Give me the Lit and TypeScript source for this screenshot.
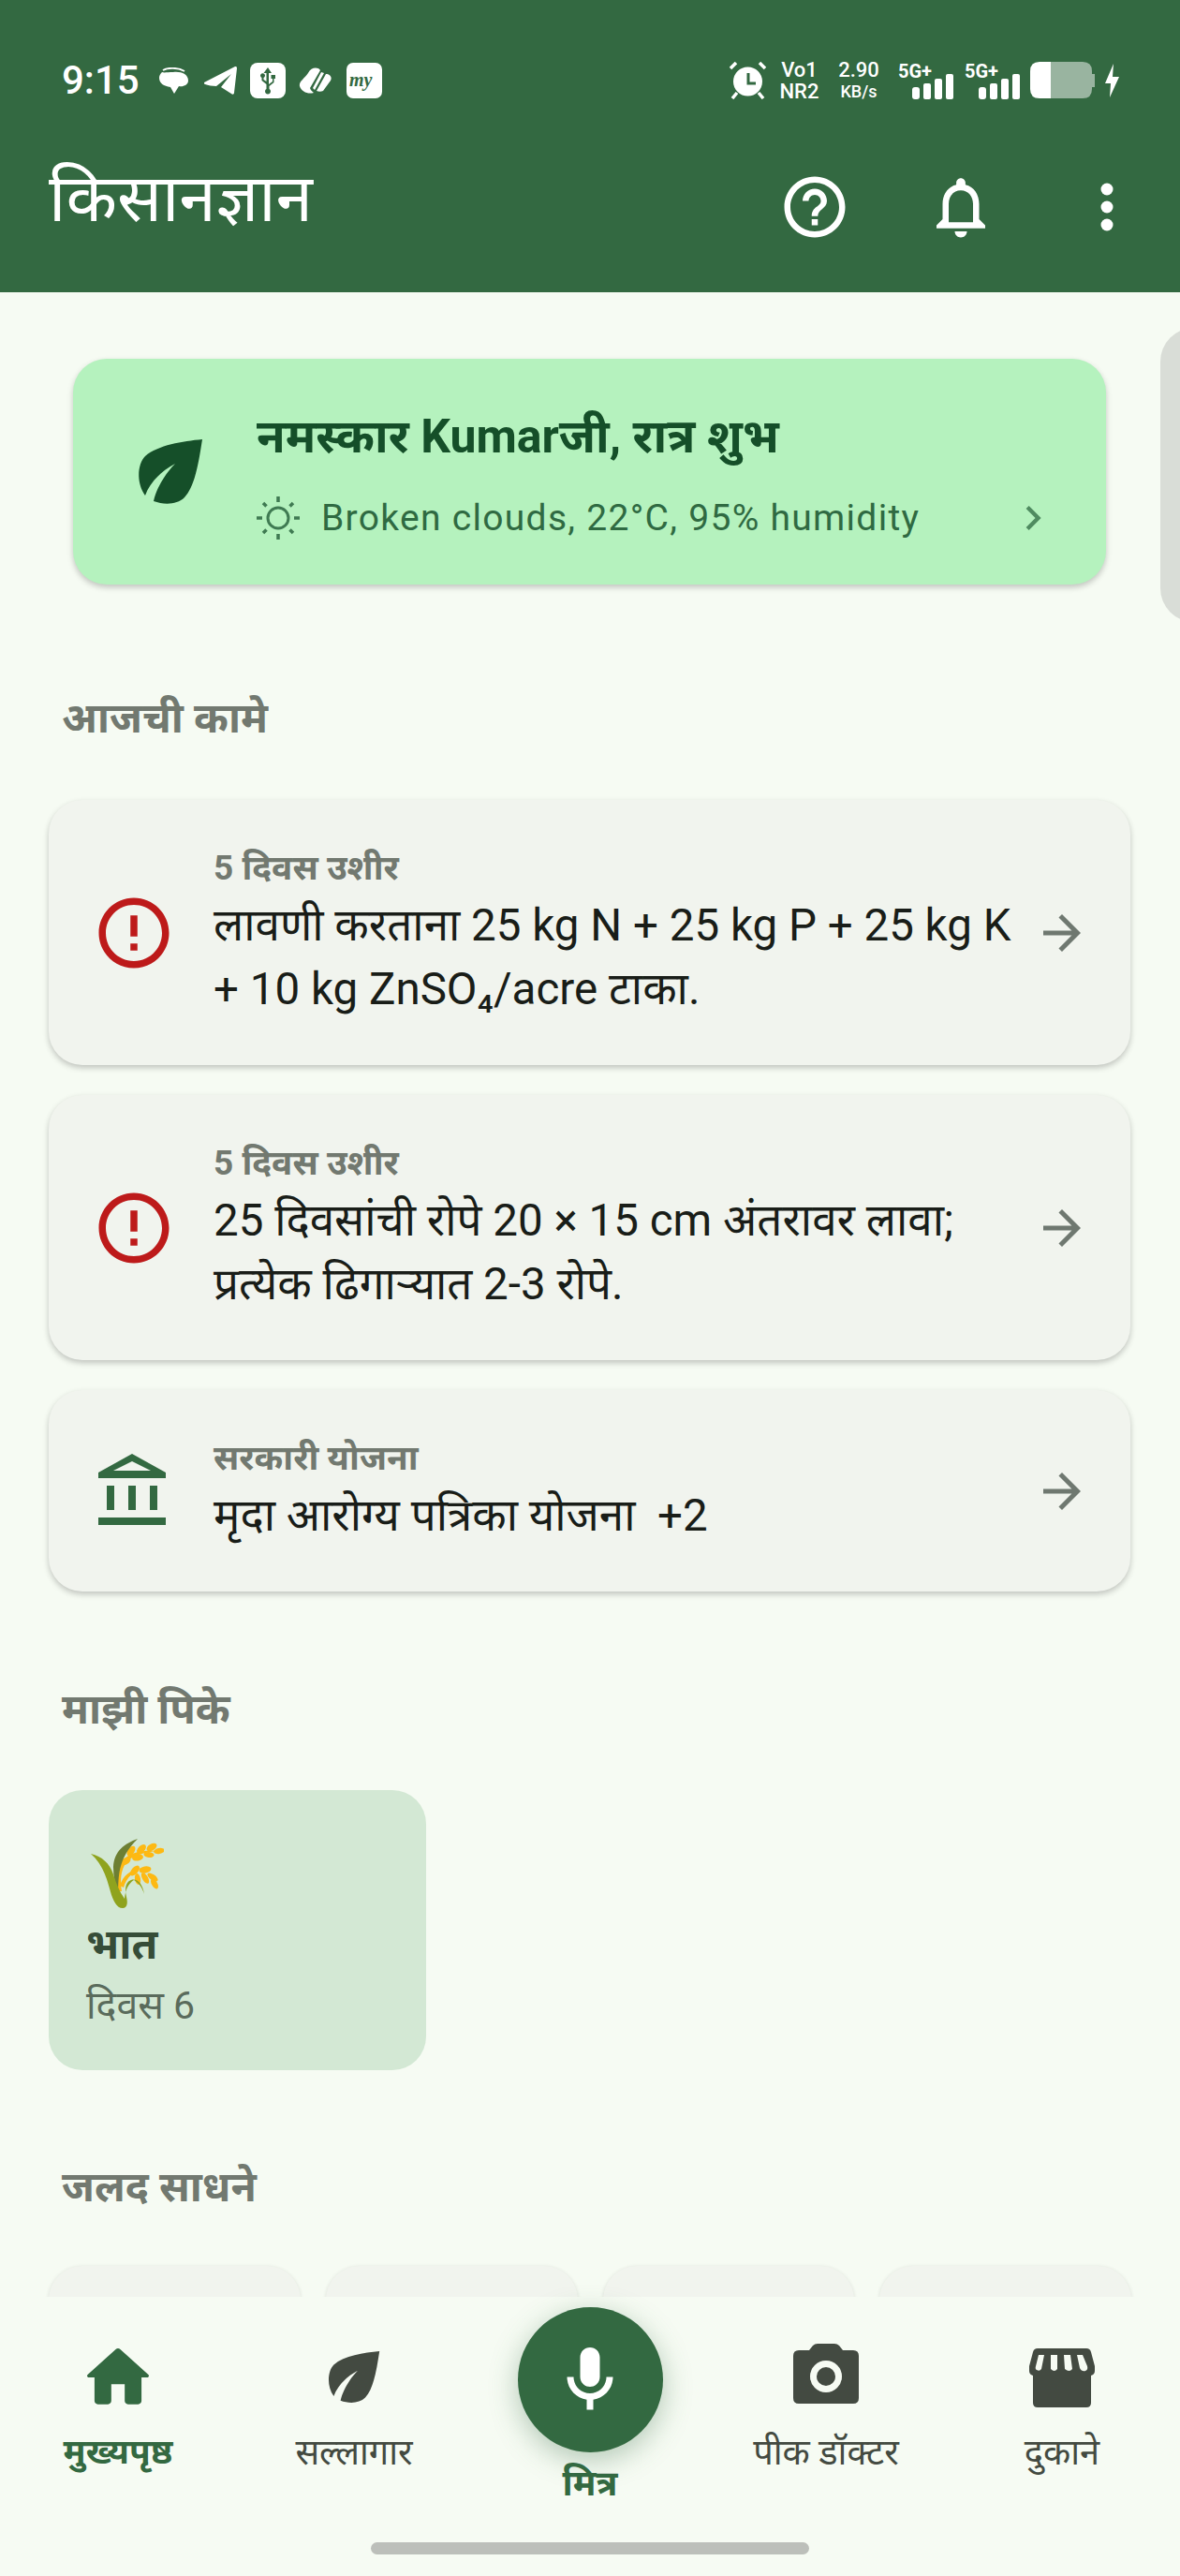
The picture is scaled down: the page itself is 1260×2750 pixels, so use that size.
import { LitElement, html, css } from 'lit';
import { customElement } from 'lit/decorators.js';

const LEAF = 'M69 0C48 2 22 6 8 18C0 26-2 46 8 60C13 46 25 34 40 26C30 36 20 52 17 66C28 70 42 70 50 62C61 50 65 26 69 0Z';

const leaf = (cls: string) => html`<svg class=${cls} viewBox="0 0 70 70"><path fill="currentColor" d=${LEAF}/></svg>`;

const arrow = html`<svg class="arrow" viewBox="0 0 24 24"><path fill="currentColor" d="M12 4l-1.41 1.41L16.17 11H4v2h12.17l-5.58 5.59L12 20l8-8z"/></svg>`;

const alertIcon = html`<svg class="task-icon" viewBox="0 0 24 24"><path fill="#bd1a1a" d="M11 15h2v2h-2zm0-8h2v6h-2zm.99-5C6.47 2 2 6.48 2 12s4.47 10 9.99 10C17.52 22 22 17.52 22 12S17.52 2 11.99 2zM12 20c-4.42 0-8-3.58-8-8s3.58-8 8-8 8 3.58 8 8-3.58 8-8 8z"/></svg>`;

const bankIcon = html`<svg class="bank" viewBox="0 0 72 76"><path fill="#336941" fill-rule="evenodd" d="M36 0L72 20V26H0V20ZM36 8L16 18H56ZM9 34H17V60H9ZM32 34H40V60H32ZM55 34H63V60H55ZM0 68H72V76H0Z"/></svg>`;

const signal = (arrows: boolean) => html`
  <div class="signal">
    <span class="signal__label">5G+</span>
    <svg class="signal__bars" viewBox="0 0 60 40">
      ${arrows ? html`<path fill="#fff" opacity=".25" d="M5 27l5-6 5 6zM5 31l5 7 5-7z"/>` : ''}
      <rect x="15" y="27" width="8" height="13" rx="3" fill="#fff"/>
      <rect x="27" y="23" width="8" height="17" rx="2" fill="#fff"/>
      <rect x="39" y="18" width="8" height="22" rx="2" fill="#fff"/>
      <rect x="51" y="13" width="8" height="27" rx="2" fill="#fff"/>
    </svg>
  </div>`;

type Task = { over: string; lines: unknown; icon: unknown };

const tasks: Task[] = [
  {
    over: '5 दिवस उशीर',
    icon: alertIcon,
    lines: html`लावणी करताना 25 kg N + 25 kg P + 25 kg K<br />+ 10 kg ZnSO₄/acre टाका.`,
  },
  {
    over: '5 दिवस उशीर',
    icon: alertIcon,
    lines: html`25 दिवसांची रोपे 20 × 15 cm अंतरावर लावा;<br />प्रत्येक ढिगाऱ्यात 2-3 रोपे.`,
  },
  {
    over: 'सरकारी योजना',
    icon: bankIcon,
    lines: html`मृदा आरोग्य पत्रिका योजना&nbsp; +2`,
  },
];

@customElement('app-root')
export default class AppRoot extends LitElement {
  static override styles = css`
    :host {
      display: block;
      width: 1260px;
      height: 2750px;
      overflow: hidden;
      background: #f6fbf3;
      font-family: Roboto, 'Noto Sans', sans-serif;
      color: #191d18;
    }
    .page {
      display: flex;
      flex-direction: column;
      height: 2750px;
    }
    svg {
      display: block;
      flex: none;
    }
    .top {
      flex: none;
      height: 312px;
      background: #336941;
      color: #fff;
    }
    .status {
      display: flex;
      align-items: center;
      justify-content: space-between;
      box-sizing: border-box;
      height: 150px;
      padding: 21px 65px 0 66px;
    }
    .status__side {
      display: flex;
      align-items: center;
    }
    .time {
      font-size: 42px;
      font-weight: 500;
      margin-right: 21px;
    }
    .tiny {
      display: flex;
      flex-direction: column;
      align-items: center;
      font-size: 22px;
      font-weight: 500;
      line-height: 23px;
    }
    .my {
      font: italic 700 20px 'Liberation Serif', serif;
      fill: #336941;
    }
    .signal {
      display: grid;
      width: 60px;
      height: 40px;
    }
    .signal__label,
    .signal__bars {
      grid-area: 1 / 1;
    }
    .signal__label {
      font-size: 20px;
      font-weight: 700;
      line-height: 20px;
    }
    .signal__bars {
      width: 60px;
      height: 40px;
    }
    .appbar {
      display: flex;
      align-items: center;
      height: 142px;
      padding-left: 52px;
    }
    .brand {
      flex: 1;
      font-size: 71px;
      line-height: 80px;
      margin-top: -18px;
    }
    .app-icon {
      width: 78px;
      height: 78px;
    }
    .content {
      flex: 1;
      min-height: 0;
      overflow: hidden;
    }
    .carousel {
      display: flex;
      align-items: flex-start;
      gap: 58px;
      height: 314px;
      margin-top: 38px;
      padding-left: 78px;
    }
    .hero {
      flex: none;
      display: flex;
      align-items: center;
      box-sizing: border-box;
      width: 1103px;
      height: 241px;
      margin-top: 33px;
      padding: 0 60px 0 69px;
      border-radius: 36px;
      background: #b5f2be;
      color: #154f29;
      box-shadow: 0 3px 6px rgba(0, 0, 0, 0.22);
    }
    .hero__leaf {
      width: 70px;
      height: 70px;
      margin-right: 57px;
    }
    .hero__body {
      flex: 1;
    }
    .hero__title {
      margin-top: 3px;
      font-size: 50px;
      font-weight: 700;
      line-height: 70px;
    }
    .hero__weather {
      display: flex;
      align-items: center;
      margin-top: 26px;
      color: #2f6a42;
      font-size: 39px;
      letter-spacing: 1.3px;
    }
    .sun {
      width: 46px;
      height: 46px;
      margin-right: 23px;
    }
    .chev {
      width: 52px;
      height: 52px;
      margin-left: auto;
      margin-right: -8px;
      color: #4f8b60;
    }
    .peek {
      flex: none;
      width: 1105px;
      height: 314px;
      border-radius: 36px;
      background: #d9ddd7;
    }
    .section {
      height: 60px;
      line-height: 60px;
      padding-left: 66px;
      color: #727970;
      font-size: 44.5px;
      font-weight: 700;
    }
    .section--tasks {
      margin: 73px 0 57px;
    }
    .section--crops {
      margin: 96px 0 56px;
    }
    .section--tools {
      margin: 95px 0 54px;
    }
    .tasks {
      display: flex;
      flex-direction: column;
      gap: 32px;
      margin: 0 53px 0 52px;
    }
    .task {
      display: flex;
      align-items: center;
      box-sizing: border-box;
      padding: 48px 43px 47px 46px;
      border-radius: 36px;
      background: #f1f4ee;
      box-shadow: 0 3px 6px rgba(0, 0, 0, 0.22);
    }
    .task-slot {
      flex: none;
      width: 130px;
    }
    .task-icon {
      width: 90px;
      height: 90px;
    }
    .bank {
      width: 72px;
      height: 76px;
      margin: 0 0 4px 7px;
    }
    .task__body {
      flex: 1;
      min-width: 0;
    }
    .task__over {
      color: #727970;
      font-size: 37px;
      font-weight: 700;
      line-height: 50px;
    }
    .task__text {
      margin-top: 2px;
      font-size: 47.5px;
      line-height: 68px;
      white-space: nowrap;
    }
    .arrow {
      width: 60px;
      height: 60px;
      color: #6f7870;
    }
    .crop {
      box-sizing: border-box;
      width: 403px;
      height: 299px;
      margin-left: 52px;
      padding: 52px 40px 0;
      border-radius: 36px;
      background: #d3e8d4;
    }
    .rice {
      width: 78px;
      height: 74px;
      margin-left: 5px;
    }
    .crop__name {
      margin-top: 9px;
      color: #364d38;
      font-size: 45px;
      font-weight: 700;
      line-height: 60px;
    }
    .crop__day {
      margin-top: 7px;
      color: #5a6b5c;
      font-size: 41px;
      line-height: 56px;
    }
    .tools {
      display: grid;
      grid-template-columns: repeat(4, 1fr);
      gap: 27px;
      width: 1156px;
      margin-left: 52px;
    }
    .tool {
      height: 300px;
      border-radius: 36px;
      background: #f1f4ee;
      box-shadow: 0 1px 4px rgba(0, 0, 0, 0.12);
    }
    .nav {
      flex: none;
      display: flex;
      flex-direction: column;
      align-items: center;
      height: 298px;
      background: #f6fbf3;
    }
    .tabs {
      display: grid;
      grid-template-columns: repeat(5, 252px);
      height: 262px;
    }
    .tab {
      display: flex;
      flex-direction: column;
      align-items: center;
      padding-top: 44px;
      color: #434a41;
      font-size: 38px;
      line-height: 44px;
    }
    .tab--on {
      color: #336941;
      font-size: 37px;
      font-weight: 700;
    }
    .tab__icon {
      display: flex;
      align-items: center;
      justify-content: center;
      width: 86px;
      height: 84px;
      margin-bottom: 16px;
    }
    .home {
      width: 86px;
      height: 86px;
    }
    .nav-leaf {
      width: 56px;
      height: 56px;
    }
    .camera {
      width: 70px;
      height: 64px;
      margin-top: -8px;
    }
    .store {
      width: 70px;
      height: 63px;
    }
    .tab--mic {
      padding-top: 11px;
      color: #336941;
      font-weight: 700;
    }
    .fab {
      display: flex;
      align-items: center;
      justify-content: center;
      width: 155px;
      height: 155px;
      margin-bottom: 11px;
      border-radius: 50%;
      background: #336941;
      box-shadow: 0 8px 30px rgba(51, 105, 65, 0.35);
    }
    .mic {
      width: 84px;
      height: 84px;
    }
    .pill {
      width: 468px;
      height: 13px;
      border-radius: 7px;
      background: #bcbfba;
    }
  `;

  private renderStatus() {
    return html`
      <div class="status">
        <div class="status__side">
          <span class="time">9:15</span>
          <svg width="31" height="28" viewBox="0 0 31 28" style="margin-right:17px">
            <path fill="#fff" d="M15 5C23 4 31 7 31 14C31 19 25 21 21 20L16 28L12 21C5 20 0 17 0 11C0 9 1 7 3 5C5 6 9 5 15 5Z"/>
            <path fill="none" stroke="#fff" stroke-width="2" d="M4 3C9 0 20 0 27 4"/>
          </svg>
          <svg width="35" height="30" viewBox="0 0 35 30" style="margin-right:14px">
            <path fill="#fff" d="M0 17L33 0C34 0 35 0 35 2L32 28C32 30 30 30 29 29L18 22L29 8L13 21C9 21 4 20 1 19C0 19 0 18 0 17Z"/>
          </svg>
          <svg width="38" height="38" viewBox="0 0 38 38" style="margin-right:14px">
            <rect width="38" height="38" rx="8" fill="#fff"/>
            <path fill="#336941" d="M19 5l4 6h-3v12l4-3v-3h-1.500v-4h4.500v4h-1.500v4l-5 4v3a3 3 0 1 1-3 0v-5l-5-4v-3a2.500 2.500 0 1 1 2 0v2l3 2V11h-3z"/>
          </svg>
          <svg width="35" height="28" viewBox="0 0 35 28" style="margin-right:16px">
            <path fill="#fff" d="M10 6C13 0 20-1 23 3L12 22C13 25 15 26 16 27C10 29 3 26 1 20C0 15 6 12 10 6ZM24 5L27 6L17 24L15 22ZM29 7C33 7 36 10 34 14L26 25C24 26 21 26 19 25Z"/>
          </svg>
          <svg width="38" height="38" viewBox="0 0 38 38">
            <rect width="38" height="38" rx="7" fill="#fff"/>
            <text x="3" y="25" class="my">my</text>
          </svg>
        </div>
        <div class="status__side">
          <svg width="39" height="40" viewBox="0 0 39 40">
            <circle cx="19.500" cy="21" r="15.500" fill="#fff"/>
            <path fill="none" stroke="#336941" stroke-width="3" d="M20 12V23H28"/>
            <path fill="none" stroke="#fff" stroke-width="3.500" d="M1 7L7 1M38 7L32 1M3 39L8 33M36 39L31 33"/>
          </svg>
          <div class="tiny" style="margin-left:13px;width:45px"><span>Vo1</span><span>NR2</span></div>
          <div class="tiny" style="margin-left:18px;width:46px"><span>2.90</span><span style="font-size:18px">KB/s</span></div>
          <span style="margin-left:19px">${signal(true)}</span>
          <span style="margin-left:11px">${signal(false)}</span>
          <svg width="69" height="39" viewBox="0 0 69 39" style="margin-left:10px">
            <path fill="#fff" d="M10 0H22V39H10Q0 39 0 29V10Q0 0 10 0Z"/>
            <path fill="#fff" opacity=".5" d="M22 0H56Q66 0 66 10V13H69V27H66V29Q66 39 56 39H22Z"/>
          </svg>
          <svg width="15" height="36" viewBox="0 0 15 36" style="margin-left:11px">
            <path fill="#fff" d="M9 0L0 21H6L5 36L15 14H8Z"/>
          </svg>
        </div>
      </div>`;
  }

  private renderAppBar() {
    return html`
      <div class="appbar">
        <div class="brand">किसानज्ञान</div>
        <svg class="app-icon" viewBox="0 0 24 24"><path fill="#fff" d="M11 18h2v-2h-2v2zm1-16C6.480 2 2 6.480 2 12s4.480 10 10 10 10-4.480 10-10S17.520 2 12 2zm0 18c-4.410 0-8-3.590-8-8s3.590-8 8-8 8 3.590 8 8-3.590 8-8 8zm0-14c-2.210 0-4 1.790-4 4h2c0-1.100.9-2 2-2s2 .9 2 2c0 2-3 1.750-3 5h2c0-2.250 3-2.500 3-5 0-2.210-1.790-4-4-4z"/></svg>
        <svg class="app-icon" style="margin-left:78px" viewBox="0 0 24 24"><path fill="#fff" d="M12 22c1.100 0 2-.9 2-2h-4c0 1.100.9 2 2 2zm6-6v-5c0-3.070-1.630-5.640-4.500-6.320V4c0-.83-.67-1.500-1.500-1.500s-1.500.67-1.500 1.500v.68C7.640 5.360 6 7.920 6 11v5l-2 2v1h16v-1l-2-2zm-2 1H8v-6c0-2.480 1.510-4.500 4-4.500s4 2.020 4 4.500v6z"/></svg>
        <svg class="app-icon" style="margin:0 39px 0 78px" viewBox="0 0 78 78">
          <circle cx="39" cy="20" r="6.500" fill="#fff"/>
          <circle cx="39" cy="39" r="6.500" fill="#fff"/>
          <circle cx="39" cy="58" r="6.500" fill="#fff"/>
        </svg>
      </div>`;
  }

  private renderHero() {
    return html`
      <div class="carousel">
        <div class="hero">
          ${leaf('hero__leaf')}
          <div class="hero__body">
            <div class="hero__title">नमस्कार Kumarजी, रात्र शुभ</div>
            <div class="hero__weather">
              <svg class="sun" viewBox="0 0 46 46">
                <circle cx="23" cy="23" r="11" fill="none" stroke="#3f7a52" stroke-width="3"/>
                <path fill="none" stroke="#3f7a52" stroke-width="3.500" d="M23 0V6M23 40V46M0 23H6M40 23H46M7 7L10.500 10.500M35.500 35.500L39 39M7 39L10.500 35.500M35.500 10.500L39 7"/>
              </svg>
              <span>Broken clouds, 22°C, 95% humidity</span>
              <svg class="chev" viewBox="0 0 24 24"><path fill="currentColor" d="M10 6L8.590 7.410 13.170 12l-4.580 4.590L10 18l6-6z"/></svg>
            </div>
          </div>
        </div>
        <div class="peek"></div>
      </div>`;
  }

  private renderRice() {
    return html`
      <svg class="rice" viewBox="0 0 78 74">
        <path fill="#fdb913" d="M29 56C26 42 28 30 36 21C44 14 56 12 70 13C56 15 44 18 38 25C32 33 31 44 33 56ZM31 50C34 40 42 33 54 31C46 35 38 41 35 52Z"/>
        <g fill="#fdb913">
          <ellipse cx="43" cy="13" rx="3.500" ry="6" transform="rotate(35 43 13)"/>
          <ellipse cx="54" cy="11" rx="3.500" ry="6" transform="rotate(45 54 11)"/>
          <ellipse cx="65" cy="9" rx="3.500" ry="6" transform="rotate(60 65 9)"/>
          <ellipse cx="73" cy="13" rx="3" ry="6" transform="rotate(80 73 13)"/>
          <ellipse cx="37" cy="24" rx="3.500" ry="6" transform="rotate(60 37 24)"/>
          <ellipse cx="50" cy="20" rx="3.500" ry="6" transform="rotate(80 50 20)"/>
          <ellipse cx="62" cy="17" rx="3" ry="5.500" transform="rotate(95 62 17)"/>
          <ellipse cx="47" cy="34" rx="3.500" ry="6.500" transform="rotate(40 47 34)"/>
          <ellipse cx="58" cy="33" rx="3.500" ry="6.500" transform="rotate(80 58 33)"/>
          <ellipse cx="58" cy="42" rx="3" ry="6.500" transform="rotate(150 58 42)"/>
          <ellipse cx="66" cy="41" rx="3" ry="6.500" transform="rotate(125 66 41)"/>
          <ellipse cx="68" cy="48" rx="3" ry="6" transform="rotate(150 68 48)"/>
          <ellipse cx="50" cy="43" rx="3" ry="6" transform="rotate(170 50 43)"/>
        </g>
        <path fill="#6d7f33" d="M50 0C36 5 25 13 24 30C24 40 26 50 29 58C30 40 28 22 50 0Z"/>
        <path fill="#8fa31e" d="M0 16C12 19 20 26 24 38C27 48 31 57 36 64C37 54 40 48 46 44C51 47 55 52 57 59C55 47 49 42 43 44C37 46 36 54 38 62C40 70 38 74 34 74C28 74 25 68 22 60C18 46 14 28 0 16Z"/>
      </svg>`;
  }

  private renderNav() {
    return html`
      <nav class="nav">
        <div class="tabs">
          <div class="tab tab--on">
            <div class="tab__icon">
              <svg class="home" viewBox="0 0 24 24"><path fill="currentColor" d="M10 19v-5h4v5c0 .55.45 1 1 1h3c.55 0 1-.45 1-1v-7h1.700c.46 0 .68-.57.33-.87L12.670 3.600c-.38-.34-.96-.34-1.340 0l-8.360 7.530c-.34.3-.13.87.33.87H5v7c0 .55.45 1 1 1h3c.55 0 1-.45 1-1z"/></svg>
            </div>
            मुख्यपृष्ठ
          </div>
          <div class="tab">
            <div class="tab__icon">${leaf('nav-leaf')}</div>
            सल्लागार
          </div>
          <div class="tab tab--mic">
            <div class="fab">
              <svg class="mic" viewBox="0 0 24 24"><path fill="#fff" d="M12 14c1.660 0 3-1.340 3-3V5c0-1.660-1.340-3-3-3S9 3.340 9 5v6c0 1.660 1.340 3 3 3zm5-3c0 2.760-2.240 5-5 5s-5-2.240-5-5H5c0 3.530 2.610 6.430 6 6.920V21h2v-3.080c3.390-.49 6-3.390 6-6.920h-2z"/></svg>
            </div>
            मित्र
          </div>
          <div class="tab">
            <div class="tab__icon">
              <svg class="camera" viewBox="0 0 70 64">
                <path fill="currentColor" d="M6 7H17L21 2Q23 0 26 0H44Q47 0 49 2L53 7H64Q70 7 70 13V58Q70 64 64 64H6Q0 64 0 58V13Q0 7 6 7Z"/>
                <circle cx="35" cy="35" r="13.500" fill="none" stroke="#f6fbf3" stroke-width="7"/>
              </svg>
            </div>
            पीक डॉक्टर
          </div>
          <div class="tab">
            <div class="tab__icon">
              <svg class="store" viewBox="0 0 70 63">
                <path fill="currentColor" d="M9 0H61Q65 0 66 4L70 19V24Q70 28 66 29V58Q66 63 61 63H9Q4 63 4 58V29Q0 28 0 24V19L4 4Q5 0 9 0Z"/>
                <path fill="#f6fbf3" d="M10 7H16L13 22Q11 25 8 23Q6 22 7 19ZM23 7H30V22Q27 26 23 22ZM37 7H44L46 22Q43 26 38 22ZM51 7H57L62 19Q63 23 60 24Q56 25 54 21Z"/>
              </svg>
            </div>
            दुकाने
          </div>
        </div>
        <div class="pill"></div>
      </nav>`;
  }

  override render() {
    return html`
      <div class="page">
        <header class="top">
          ${this.renderStatus()}
          ${this.renderAppBar()}
        </header>
        <main class="content">
          ${this.renderHero()}
          <div class="section section--tasks">आजची कामे</div>
          <div class="tasks">
            ${tasks.map((t) => html`
              <div class="task">
                <div class="task-slot">${t.icon}</div>
                <div class="task__body">
                  <div class="task__over">${t.over}</div>
                  <div class="task__text">${t.lines}</div>
                </div>
                ${arrow}
              </div>`)}
          </div>
          <div class="section section--crops">माझी पिके</div>
          <div class="crop">
            ${this.renderRice()}
            <div class="crop__name">भात</div>
            <div class="crop__day">दिवस 6</div>
          </div>
          <div class="section section--tools">जलद साधने</div>
          <div class="tools">
            <div class="tool"></div>
            <div class="tool"></div>
            <div class="tool"></div>
            <div class="tool"></div>
          </div>
        </main>
        ${this.renderNav()}
      </div>
    `;
  }
}
